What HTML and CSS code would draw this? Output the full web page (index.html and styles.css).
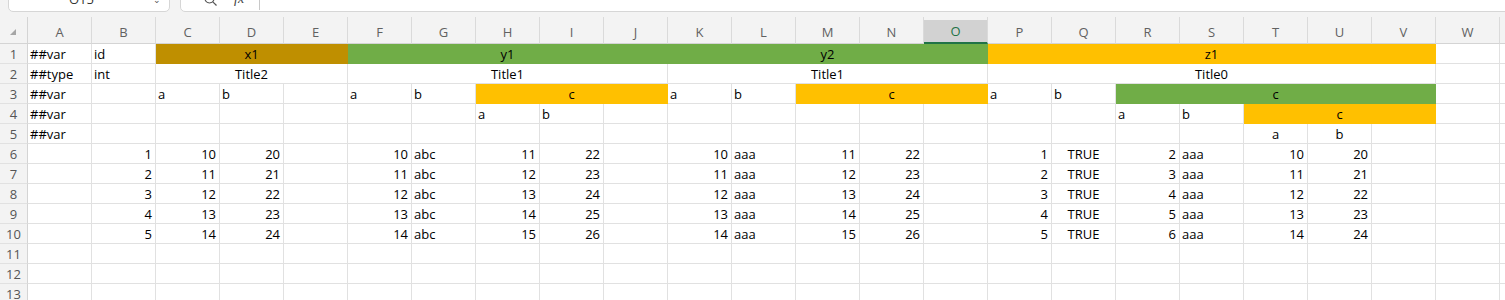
FILE: index.html
```html
<!DOCTYPE html>
<html lang="en">
<head>
  <meta charset="UTF-8">
  <title>Sheet1</title>
  <link rel="stylesheet" href="styles.css">
</head>
<body>

  <div class="topbar">
    <div class="namebox">
      <span class="cellref">O15</span>
      <span class="drop">&#8964;</span>
    </div>
    <div class="formulabox">
      <svg class="search" width="16" height="16" viewBox="0 0 16 16">
        <circle cx="6.5" cy="6.5" r="4.5" fill="none" stroke="#555" stroke-width="1.2"/>
        <line x1="9.8" y1="9.8" x2="13.5" y2="13.5" stroke="#555" stroke-width="1.2"/>
      </svg>
      <span class="fx">fx</span>
      <span class="sep"></span>
    </div>
  </div>

  <table class="sheet">
    <colgroup>
      <col class="rhcol">
      <col span="24" class="ccol">
    </colgroup>
    <tr class="head">
      <th class="corner"><span class="tri"></span></th>
      <th>A</th><th>B</th><th>C</th><th>D</th><th>E</th><th>F</th><th>G</th><th>H</th>
      <th>I</th><th>J</th><th>K</th><th>L</th><th>M</th><th>N</th><th class="sel">O</th><th>P</th>
      <th>Q</th><th>R</th><th>S</th><th>T</th><th>U</th><th>V</th><th>W</th><th>X</th>
    </tr>
    <tr>
      <th class="rh">1</th>
      <td>##var</td><td>id</td>
      <td colspan="3" class="gold ctr">x1</td>
      <td colspan="5" class="green ctr">y1</td>
      <td colspan="5" class="green ctr">y2</td>
      <td colspan="7" class="yellow ctr">z1</td>
      <td></td><td></td>
    </tr>
    <tr>
      <th class="rh">2</th>
      <td>##type</td><td>int</td>
      <td colspan="3" class="ctr">Title2</td>
      <td colspan="5" class="ctr">Title1</td>
      <td colspan="5" class="ctr">Title1</td>
      <td colspan="7" class="ctr">Title0</td>
      <td></td><td></td>
    </tr>
    <tr>
      <th class="rh">3</th>
      <td>##var</td><td></td>
      <td>a</td><td>b</td><td></td>
      <td>a</td><td>b</td><td colspan="3" class="yellow ctr">c</td>
      <td>a</td><td>b</td><td colspan="3" class="yellow ctr">c</td>
      <td>a</td><td>b</td><td colspan="5" class="green ctr">c</td>
      <td></td><td></td>
    </tr>
    <tr>
      <th class="rh">4</th>
      <td>##var</td>
      <td></td><td></td><td></td><td></td><td></td><td></td>
      <td>a</td><td>b</td>
      <td></td><td></td><td></td><td></td><td></td><td></td><td></td><td></td>
      <td>a</td><td>b</td><td colspan="3" class="yellow ctr">c</td>
      <td></td><td></td>
    </tr>
    <tr>
      <th class="rh">5</th>
      <td>##var</td>
      <td></td><td></td><td></td><td></td><td></td><td></td><td></td><td></td><td></td>
      <td></td><td></td><td></td><td></td><td></td><td></td><td></td><td></td><td></td>
      <td class="ctr">a</td><td class="ctr">b</td>
      <td></td><td></td><td></td>
    </tr>
    <tr>
      <th class="rh">6</th>
      <td></td><td class="num">1</td><td class="num">10</td><td class="num">20</td><td></td>
      <td class="num">10</td><td>abc</td><td class="num">11</td><td class="num">22</td><td></td>
      <td class="num">10</td><td>aaa</td><td class="num">11</td><td class="num">22</td><td></td>
      <td class="num">1</td><td class="ctr">TRUE</td><td class="num">2</td><td>aaa</td><td class="num">10</td><td class="num">20</td><td></td>
      <td></td><td></td>
    </tr>
    <tr>
      <th class="rh">7</th>
      <td></td><td class="num">2</td><td class="num">11</td><td class="num">21</td><td></td>
      <td class="num">11</td><td>abc</td><td class="num">12</td><td class="num">23</td><td></td>
      <td class="num">11</td><td>aaa</td><td class="num">12</td><td class="num">23</td><td></td>
      <td class="num">2</td><td class="ctr">TRUE</td><td class="num">3</td><td>aaa</td><td class="num">11</td><td class="num">21</td><td></td>
      <td></td><td></td>
    </tr>
    <tr>
      <th class="rh">8</th>
      <td></td><td class="num">3</td><td class="num">12</td><td class="num">22</td><td></td>
      <td class="num">12</td><td>abc</td><td class="num">13</td><td class="num">24</td><td></td>
      <td class="num">12</td><td>aaa</td><td class="num">13</td><td class="num">24</td><td></td>
      <td class="num">3</td><td class="ctr">TRUE</td><td class="num">4</td><td>aaa</td><td class="num">12</td><td class="num">22</td><td></td>
      <td></td><td></td>
    </tr>
    <tr>
      <th class="rh">9</th>
      <td></td><td class="num">4</td><td class="num">13</td><td class="num">23</td><td></td>
      <td class="num">13</td><td>abc</td><td class="num">14</td><td class="num">25</td><td></td>
      <td class="num">13</td><td>aaa</td><td class="num">14</td><td class="num">25</td><td></td>
      <td class="num">4</td><td class="ctr">TRUE</td><td class="num">5</td><td>aaa</td><td class="num">13</td><td class="num">23</td><td></td>
      <td></td><td></td>
    </tr>
    <tr>
      <th class="rh">10</th>
      <td></td><td class="num">5</td><td class="num">14</td><td class="num">24</td><td></td>
      <td class="num">14</td><td>abc</td><td class="num">15</td><td class="num">26</td><td></td>
      <td class="num">14</td><td>aaa</td><td class="num">15</td><td class="num">26</td><td></td>
      <td class="num">5</td><td class="ctr">TRUE</td><td class="num">6</td><td>aaa</td><td class="num">14</td><td class="num">24</td><td></td>
      <td></td><td></td>
    </tr>
    <tr>
      <th class="rh">11</th>
      <td></td><td></td><td></td><td></td><td></td><td></td><td></td><td></td><td></td><td></td><td></td><td></td>
      <td></td><td></td><td></td><td></td><td></td><td></td><td></td><td></td><td></td><td></td><td></td><td></td>
    </tr>
    <tr>
      <th class="rh">12</th>
      <td></td><td></td><td></td><td></td><td></td><td></td><td></td><td></td><td></td><td></td><td></td><td></td>
      <td></td><td></td><td></td><td></td><td></td><td></td><td></td><td></td><td></td><td></td><td></td><td></td>
    </tr>
    <tr>
      <th class="rh">13</th>
      <td></td><td></td><td></td><td></td><td></td><td></td><td></td><td></td><td></td><td></td><td></td><td></td>
      <td></td><td></td><td></td><td></td><td></td><td></td><td></td><td></td><td></td><td></td><td></td><td></td>
    </tr>
  </table>

</body>
</html>
```

FILE: styles.css
```css
body {
  margin: 0;
  font-family: "Open Sans", "Liberation Sans", sans-serif;
  font-size: 13px;
  color: #000;
  background-color: #ffffff;
  overflow: hidden;
}

/* formula bar, mostly scrolled out of view */
.topbar {
  display: flex;
  gap: 10px;
  height: 17px;
  padding-left: 8px;
  background-color: #f3f3f3;
  overflow: hidden;
}

.namebox,
.formulabox {
  box-sizing: border-box;
  height: 26px;
  margin-top: -14px;
  background: #fff;
  border: 1px solid #d6d6d6;
  border-radius: 5px;
  display: flex;
  align-items: center;
  color: #333;
}

.namebox {
  width: 162px;
  position: relative;
}

.cellref {
  margin-left: 60px;
  font-size: 13px;
}

.drop {
  margin-left: auto;
  margin-right: 8px;
  font-size: 9px;
  color: #555;
}

.formulabox {
  flex: 1;
  margin-right: -10px;
}

.search {
  margin-left: 22px;
  margin-top: 2px;
}

.fx {
  margin-left: 15px;
  font-family: "Liberation Serif", serif;
  font-style: italic;
  font-size: 14px;
  color: #444;
}

.sep {
  width: 1px;
  height: 22px;
  margin-left: 15px;
  background-color: #c8c8c8;
}

/* grid */
.sheet {
  border-collapse: separate;
  border-spacing: 0;
  table-layout: fixed;
  width: 1564px;
}

.rhcol {
  width: 28px;
}

.ccol {
  width: 64px;
}

.head th {
  height: 27px;
  padding: 0;
  background-color: #f3f3f3;
  border-right: 1px solid #dadada;
  border-bottom: 1px solid #d4d4d4;
  box-sizing: border-box;
  font-weight: normal;
  font-size: 13px;
  color: #616161;
  text-align: center;
  vertical-align: bottom;
  line-height: 22px;
}

.head th.corner {
  border-right: 1px solid #d4d4d4;
  position: relative;
}

.tri {
  position: absolute;
  left: 10px;
  top: 12px;
  width: 0;
  height: 0;
  border-left: 6px solid transparent;
  border-bottom: 6px solid #a6a6a6;
}

.head th.sel {
  background: linear-gradient(#f3f3f3 3px, #d2d2d2 3px);
  color: #217346;
  border-bottom: 2px solid #217346;
}

tr {
  height: 20px;
}

.rh {
  padding: 1px 0 0;
  background-color: #f3f3f3;
  border-right: 1px solid #d4d4d4;
  border-bottom: 1px solid #e1e1e1;
  box-sizing: border-box;
  font-weight: normal;
  font-size: 13px;
  color: #555;
  text-align: center;
  line-height: 18px;
}

td {
  padding: 1px 2px 0;
  height: 20px;
  box-sizing: border-box;
  border-right: 1px solid #e1e1e1;
  border-bottom: 1px solid #e1e1e1;
  white-space: nowrap;
  overflow: hidden;
  line-height: 18px;
}

.num {
  text-align: right;
  padding-right: 3px;
}

.ctr {
  text-align: center;
}

.gold {
  background-color: #bf8f00;
  border-color: #bf8f00;
}

.green {
  background-color: #70ad47;
  border-color: #70ad47;
}

.yellow {
  background-color: #ffc000;
  border-color: #ffc000;
}
```
